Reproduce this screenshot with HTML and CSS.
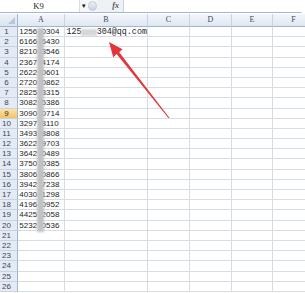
FILE: index.html
```html
<!DOCTYPE html>
<html>
<head>
<meta charset="utf-8">
<link rel="stylesheet" href="styles.css">
</head>
<body>
<div class="app">
  <div class="fbar">
    <div class="namebox">K9</div>
    <div class="drop">&#9662;</div>
    <div class="knob"></div>
    <div class="fxarea"><span class="fx">fx</span></div>
    <div class="input"></div>
  </div>
  <div class="sheet" id="sheet">
    <div class="corner"></div>
    <div class="ch">A</div><div class="ch">B</div><div class="ch">C</div><div class="ch">D</div><div class="ch">E</div><div class="ch">F</div>
  </div>
  <div class="redact-a"></div>
  <div class="redact-b"></div>
  <svg class="arrow" width="305" height="293" viewBox="0 0 305 293">
    <polygon points="109,42 122.5,49.2 119.2,52.3 169.4,117.7 168.6,118.3 116.6,54.1 113.2,57.2" fill="#e2363a"/>
  </svg>
</div>
<script>
(function(){
  var data = [
    ["1256","0304"],["6166","6430"],["8210","3546"],["2367","4174"],["2622","0601"],
    ["2720","0862"],["2825","3315"],["3082","5386"],["3090","0714"],["3297","8110"],
    ["3493","8808"],["3622","9703"],["3642","0489"],["3750","0385"],["3806","0866"],
    ["3942","7238"],["4030","1298"],["4196","0952"],["4425","2058"],["5232","0536"]
  ];
  var s = document.getElementById('sheet');
  var html = '';
  for (var r = 1; r <= 26; r++) {
    html += '<div class="rh' + (r === 9 ? ' sel' : '') + '">' + r + '</div>';
    var a = data[r-1];
    html += '<div class="c ca">' + (a ? a[0] + '<span class="gap"></span>' + a[1] : '') + '</div>';
    html += '<div class="c cb">' + (r === 1 ? '125<span class="gapb"></span>304@qq.com' : '') + '</div>';
    html += '<div class="c"></div><div class="c"></div><div class="c"></div><div class="c"></div>';
  }
  s.insertAdjacentHTML('beforeend', html);
})();
</script>
</body>
</html>
```

FILE: styles.css
```css
html, body {
  margin: 0;
  padding: 0;
  background: #ffffff;
}
.app {
  position: relative;
  width: 305px;
  height: 293px;
  overflow: hidden;
  font-family: "Liberation Sans", Arial, sans-serif;
}
.fbar {
  display: flex;
  height: 12px;
  border-bottom: 1px solid #a7b6cb;
  background: #f4f6f9;
  margin-bottom: 1px;
  margin-right: 2px;
  border-bottom-right-radius: 3px;
}
.namebox {
  width: 80px;
  background: #ffffff;
  border-right: 1px solid #d5dce6;
  font-family: "Liberation Serif", serif;
  font-size: 8.5px;
  line-height: 12px;
  text-align: center;
  color: #222;
  box-sizing: border-box;
  padding-right: 2px;
}
.drop {
  width: 8px;
  font-size: 7px;
  line-height: 12px;
  text-align: center;
  color: #111;
}
.knob {
  width: 9px;
  height: 10px;
  margin-top: 1px;
  border-radius: 5px;
  background: linear-gradient(#eef1f5, #c9d1dc);
  border: 1px solid #c3ccd8;
  box-sizing: border-box;
}
.fxarea {
  width: 26px;
  display: flex;
  justify-content: flex-end;
  padding-right: 4px;
  box-sizing: border-box;
  background: #eef1f5;
}
.fx {
  font-family: "Liberation Serif", serif;
  font-style: italic;
  font-weight: bold;
  font-size: 8px;
  line-height: 12px;
  color: #555;
}
.input {
  flex: 1;
  background: #ffffff;
  border-left: 1px solid #c9d2de;
}
.sheet {
  display: grid;
  grid-template-columns: 18px 47px 83px 42px 42px 41px 42px;
  grid-template-rows: 13px;
  grid-auto-rows: 10.2px;
}
.corner {
  background: linear-gradient(#eef2f8, #dbe3ee);
  border-right: 1px solid #9eb6ce;
  border-bottom: 1px solid #9eb6ce;
  box-sizing: border-box;
  position: relative;
}
.corner::after {
  content: "";
  position: absolute;
  right: 2px;
  bottom: 2px;
  border-left: 7px solid transparent;
  border-bottom: 7px solid #b9c7d8;
}
.ch {
  background: linear-gradient(#f3f6fb, #dfe7f1);
  border-right: 1px solid #c5d3e3;
  border-bottom: 1px solid #9eb6ce;
  box-sizing: border-box;
  font-family: "Liberation Serif", serif;
  font-size: 8px;
  line-height: 12px;
  text-align: center;
  color: #3b4a5e;
}
.rh {
  background: #e4ebf5;
  border-right: 1px solid #9eb6ce;
  border-bottom: 1px solid #c5d3e3;
  box-sizing: border-box;
  font-size: 8px;
  line-height: 10px;
  text-align: center;
  padding-right: 4px;
  color: #3b4658;
}
.rh.sel {
  background: linear-gradient(#fbe3a8, #f5c363);
  color: #3a3020;
}
.c {
  border-right: 1px solid #d6dce6;
  border-bottom: 1px solid #d6dce6;
  box-sizing: border-box;
  white-space: nowrap;
  font-size: 8px;
  line-height: 10px;
  color: #1e1e1e;
}
.ca {
  padding-left: 1.3px;
}
.gap {
  display: inline-block;
  width: 4.45px;
}
.cb {
  font-family: "Liberation Mono", monospace;
  font-size: 8.4px;
  padding-left: 1.5px;
}
.gapb {
  display: inline-block;
  width: 15.1px;
}
.redact-a {
  position: absolute;
  left: 37px;
  top: 28px;
  width: 6.5px;
  height: 204px;
  background: #c2c2c2;
  filter: blur(1px);
}
.redact-b {
  position: absolute;
  left: 80.5px;
  top: 28.5px;
  width: 16px;
  height: 7.5px;
  background: #d6d6d6;
  filter: blur(0.8px);
}
.arrow {
  position: absolute;
  left: 0;
  top: 0;
  pointer-events: none;
}
```
